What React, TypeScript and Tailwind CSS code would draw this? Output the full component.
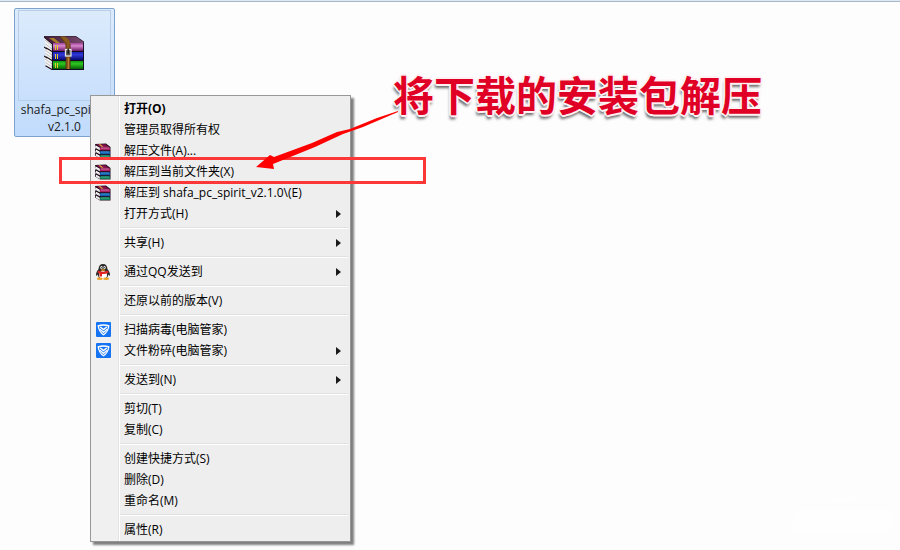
import React from "react";

type IconName = "rar" | "qq" | "shield";
type Item = { label: string; icon?: IconName; sub?: boolean; bold?: boolean };

const groups: Item[][] = [
  [
    { label: "打开(O)", bold: true },
    { label: "管理员取得所有权" },
    { label: "解压文件(A)...", icon: "rar" },
    { label: "解压到当前文件夹(X)", icon: "rar" },
    { label: "解压到 shafa_pc_spirit_v2.1.0\\(E)", icon: "rar" },
    { label: "打开方式(H)", sub: true },
  ],
  [{ label: "共享(H)", sub: true }],
  [{ label: "通过QQ发送到", icon: "qq", sub: true }],
  [{ label: "还原以前的版本(V)" }],
  [
    { label: "扫描病毒(电脑管家)", icon: "shield" },
    { label: "文件粉碎(电脑管家)", icon: "shield", sub: true },
  ],
  [{ label: "发送到(N)", sub: true }],
  [{ label: "剪切(T)" }, { label: "复制(C)" }],
  [{ label: "创建快捷方式(S)" }, { label: "删除(D)" }, { label: "重命名(M)" }],
  [{ label: "属性(R)" }],
];

function ArchiveIcon() {
  return (
    <svg width="40" height="34" viewBox="0 0 40 34" aria-hidden="true">
      <defs>
        <linearGradient id="purple" x1="0" y1="0" x2="0" y2="1">
          <stop offset="0" stopColor="#a04496" />
          <stop offset=".35" stopColor="#d887ce" />
          <stop offset="1" stopColor="#6d1763" />
        </linearGradient>
        <linearGradient id="blue" x1="0" y1="0" x2="0" y2="1">
          <stop offset="0" stopColor="#1a20b4" />
          <stop offset=".35" stopColor="#3038d8" />
          <stop offset="1" stopColor="#050a6c" />
        </linearGradient>
        <linearGradient id="green" x1="0" y1="0" x2="0" y2="1">
          <stop offset="0" stopColor="#12960f" />
          <stop offset=".35" stopColor="#2fc522" />
          <stop offset="1" stopColor="#056005" />
        </linearGradient>
        <linearGradient id="cover" x1="0" y1="0" x2="1" y2="0">
          <stop offset="0" stopColor="#3f1b38" />
          <stop offset="1" stopColor="#7a4a70" />
        </linearGradient>
      </defs>
      <path d="M0 1 8 7V15L2 12ZM0 11 8 16V24L2 21ZM0 20 8 25V33.500L2 30Z" fill="#f4f4f4" />
      <path d="M1 4 8 10M1.500 8 8 13M1 14 8 19M1.500 17.500 8 22M1 23 8 28M1.500 26.500 8 31" stroke="#a9a9a9" strokeWidth=".7" />
      <path d="M0 1 8 7.500M2 11.800 8 15.500M0 11 3 13M2 20.800 8 24.500M0 20 3 22M1.500 29.800 8 33.500" stroke="#20141c" strokeWidth="1.200" />
      <path d="M0 .5H32L40 6V8H8Z" fill="url(#cover)" stroke="#28101f" strokeWidth=".8" />
      <path d="M5 2h5l6 5h-4z" fill="#a77c27" />
      <path d="M8 7H40V15H8Z" fill="url(#purple)" />
      <path d="M8 16H40V24H8Z" fill="url(#blue)" />
      <path d="M8 25H40V33H8Z" fill="url(#green)" />
      <path d="M8 15.500H40M8 24.500H40M8 33.500H40M8.400 7V34M39.600 7V33" stroke="#100b20" />
      <path d="M11.500 9v5M13.500 9v5M11.500 18v5M13.500 18v5M11.500 27v5M13.500 27v5" stroke="#e8c92f" />
      <path d="M16 .5h5q5 3 5 7V33h-4V9Z" fill="#8b5a1f" />
      <path d="M16 .8 22 7.500V33M26.200 8V33" fill="none" stroke="#4d2c0d" strokeWidth=".8" />
      <path d="M24.500 22v11" stroke="#bd7d30" />
      <rect x="21.500" y="13.500" width="5.500" height="6.500" fill="#55504a" stroke="#e3e3e3" strokeWidth="1.300" />
      <path d="M24.200 12.500v5" stroke="#181818" strokeWidth="1.500" />
    </svg>
  );
}

function BooksIcon() {
  return (
    <svg width="16" height="16" viewBox="0 0 16 16" aria-hidden="true">
      <path d="M0 1 11 .5 15.500 4V15.500H5L0 12.500V10L1 9 0 8V6L1 5Z" fill="#1d0b1b" />
      <path d="M1 1.200H10.500L14 4H5Z" fill="#84114d" />
      <path d="M3.500 1.200h2l3 2.500H6.500z" fill="#d8a33a" />
      <path d="M5 4.300H15V7.200H5Z" fill="#a81f62" />
      <path d="M6 5h8" stroke="#e58bb4" strokeWidth=".8" />
      <path d="M5 8.300H15V11.200H5Z" fill="#125fae" />
      <path d="M6 9h8" stroke="#45a3df" strokeWidth=".8" />
      <path d="M5 12.300H15V15H5Z" fill="#137d5b" />
      <path d="M6 13h8" stroke="#48c99b" strokeWidth=".8" />
      <path d="M.8 2.500 4.800 4.800V7.200L.8 5ZM.8 6.500 4.800 8.800V11.200L.8 9ZM.8 10.500 4.800 12.800V15L.8 12.800Z" fill="#fff" />
      <path d="M1 4 4.800 6.200M1 8 4.800 10.200M1 12 4.800 14" stroke="#b5b5b5" strokeWidth=".4" />
    </svg>
  );
}

function PenguinIcon() {
  return (
    <svg width="16" height="16" viewBox="0 0 16 16" aria-hidden="true">
      <path d="M8 0C5 0 3.600 2 3.600 5 2 7 .8 9 1 11.500c.5.5 1 0 1.500-1L4 14h8l1.500-3.500c.5 1 1 1.500 1.500 1 .2-2.500-1-4.500-2.600-6.500C12.400 2 11 0 8 0Z" fill="#2a2a2a" />
      <ellipse cx="8" cy="11" rx="4" ry="4" fill="#fff" />
      <ellipse cx="6.500" cy="3.500" rx="1.200" ry="1.600" fill="#fff" />
      <ellipse cx="9.500" cy="3.500" rx="1.200" ry="1.600" fill="#fff" />
      <circle cx="6.800" cy="3.700" r=".6" />
      <circle cx="9.200" cy="3.700" r=".6" />
      <ellipse cx="8" cy="6" rx="2.500" ry=".8" fill="#f5a51d" />
      <path d="M3 6.500Q8 9 13 6.500L13.500 8.800Q10 10.500 7 10V12.500H4.500V9.500L2.500 8.500Z" fill="#e42222" />
      <ellipse cx="4.800" cy="14.700" rx="3" ry="1.300" fill="#efa126" />
      <ellipse cx="11.200" cy="14.700" rx="3" ry="1.300" fill="#efa126" />
    </svg>
  );
}

function ShieldIcon() {
  return (
    <svg width="15" height="15" viewBox="0 0 15 15" aria-hidden="true">
      <rect width="15" height="15" rx="1" fill="#1673f3" />
      <path d="M1.500 3.300Q7.500 1.300 13.500 3.300 13 10 7.500 13.500 2 10 1.500 3.300Z" fill="#fff" />
      <path d="M3 4.500Q7.500 3.200 12 4.500 11.500 9.500 7.500 12 3.500 9.500 3 4.500Z" fill="#1673f3" />
      <path d="M4.300 5 7.500 7.500 10.700 5" fill="none" stroke="#fff" strokeWidth="1.500" />
      <path d="M3.500 7 7.500 10.300 11.500 7" fill="none" stroke="#fff" strokeWidth="1.300" />
    </svg>
  );
}

const icons: Record<IconName, () => React.JSX.Element> = {
  rar: BooksIcon,
  qq: PenguinIcon,
  shield: ShieldIcon,
};

function MenuItem({ item }: { item: Item }) {
  const Icon = item.icon ? icons[item.icon] : null;
  return (
    <button role="menuitem" className="flex h-[21px] w-full items-center text-left">
      <span className="flex w-5 shrink-0 justify-center">{Icon && <Icon />}</span>
      <span className={item.bold ? "flex-1 pl-[11px] font-bold" : "flex-1 pl-[11px]"}>{item.label}</span>
      {item.sub && (
        <svg className="mr-[7px]" width="5" height="8" viewBox="0 0 5 8" aria-hidden="true">
          <path d="M0 0 5 4 0 8Z" fill="#1a1a1a" />
        </svg>
      )}
    </button>
  );
}

function ContextMenu() {
  return (
    <div
      role="menu"
      className="absolute top-[95px] left-[90px] w-[261px] border border-[#979797] bg-[#f0f0f0] bg-[linear-gradient(90deg,transparent_27px,#e2e3e3_27px,#e2e3e3_28px,#fff_28px,#fff_29px,#eeeeee_29px)] px-[2px] pt-[2px] pb-[1px] text-[12px] leading-[21px] whitespace-nowrap text-black shadow-[3px_3px_2px_rgba(0,0,0,0.5)]"
    >
      {groups.map((group, index) => (
        <React.Fragment key={group[0].label}>
          {index > 0 && (
            <div role="separator" className="flex h-2 items-center pl-[27px]">
              <div className="h-[2px] flex-1 border-t border-[#e0e0e0] bg-white" />
            </div>
          )}
          {group.map((item) => (
            <MenuItem key={item.label} item={item} />
          ))}
        </React.Fragment>
      ))}
    </div>
  );
}

function DesktopFile() {
  return (
    <button className="ml-[14px] flex w-[101px] flex-col items-center rounded-[2px] border border-[#7da2ce] bg-linear-to-b from-[#dcebfc] to-[#c1dbfc] px-[3px] pt-[1px] pb-[1px] text-[12px] leading-[17px] text-[#1a1a1a]">
      <span className="flex h-[91px] w-full items-center justify-center border border-[#b9cde8] pr-[2px] pb-[6px]">
        <ArchiveIcon />
      </span>
      <span>shafa_pc_spirit_</span>
      <span>v2.1.0</span>
    </button>
  );
}

export default function App() {
  return (
    <main className="relative min-h-screen overflow-hidden bg-[#fdfdfd] font-['Open_Sans','Noto_Sans_CJK_SC',sans-serif]">
      <div className="mb-[6px] h-[2px] border-b border-[#a9b9cc] bg-[#dfe8f3]" />
      <DesktopFile />
      <ContextMenu />
      <div className="absolute top-[157px] left-[59px] h-[27px] w-[367px] border-[3px] border-[#fb3737]" />
      <svg className="absolute top-[105px] left-[250px]" width="150" height="70" viewBox="0 0 150 70" aria-hidden="true">
        <path d="M6 62 20 50 24 52 62 38 87 27 100 24 127 13 148 6V7L113 22 93 29 65 42 23 59 24 64Z" fill="#fe0000" />
      </svg>
      <h1 className="absolute top-[65px] left-[393px] text-[41px] leading-[60px] font-bold whitespace-nowrap text-[#e10025] [text-shadow:1px_1px_0_#fdf1f3,-1px_-1px_0_#fdf1f3,1px_-1px_0_#fdf1f3,-1px_1px_0_#fdf1f3,2px_0_0_#fdf1f3,-2px_0_0_#fdf1f3,0_2px_0_#fdf1f3,0_-2px_0_#fdf1f3,-1px_4px_3px_rgba(0,0,0,0.6)]">
        将下载的安装包解压
      </h1>
      <svg className="absolute right-0 bottom-0" width="140" height="60" viewBox="0 0 140 60" aria-hidden="true">
        <path d="M62 3Q82 21 102 3Q82 13 62 3ZM36 20H134L129 43H31Z" fill="#fefefe" />
      </svg>
    </main>
  );
}
